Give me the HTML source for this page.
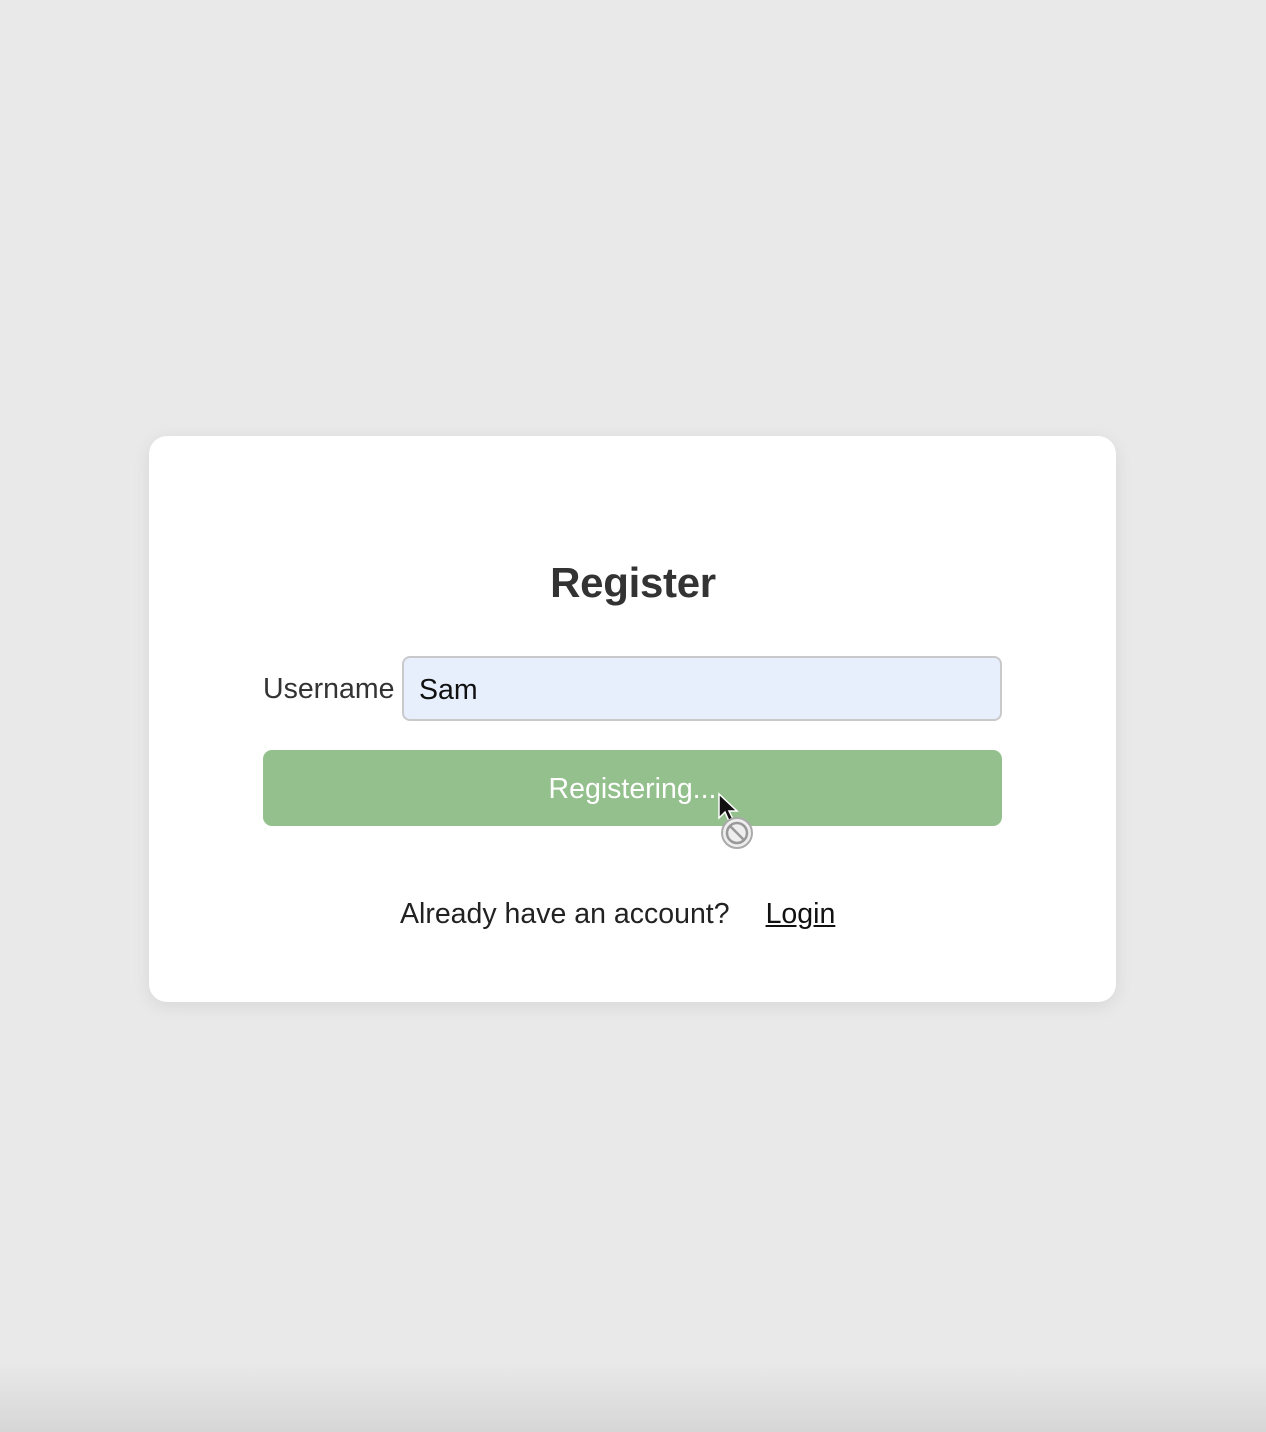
<!DOCTYPE html>
<html><head><meta charset="utf-8"><style>
html,body{margin:0;padding:0;width:1266px;height:1432px;overflow:hidden;background:#e9e9e9;font-family:"Liberation Sans",sans-serif;position:relative}
.fade{position:absolute;left:0;right:0;bottom:0;height:70px;background:linear-gradient(#e9e9e900,#d6d6d6)}
.card{position:absolute;left:149px;top:436px;width:967px;height:566px;background:#fff;border-radius:18px;box-shadow:0 4px 18px rgba(0,0,0,0.08)}
h1{position:absolute;left:0;right:0;top:559px;margin:0;text-align:center;font-size:42px;font-weight:bold;color:#333;letter-spacing:-0.3px}
.lbl{position:absolute;left:263px;top:673px;font-size:28.5px;color:#333}
.inp{position:absolute;left:402px;top:656px;width:600px;height:65px;box-sizing:border-box;background:#e8effc;border:2px solid #c9c9cc;border-radius:8px;font-size:28.5px;color:#111;padding:16px 0 0 15px}
.btn{position:absolute;left:263px;top:750px;width:739px;height:76px;background:#93c08c;border-radius:9px;color:#fff;font-size:28.5px;text-align:center;line-height:78px}
.foot{position:absolute;left:400px;top:898px;font-size:28.5px;color:#222}
.foot a{margin-left:36px;color:#111;text-decoration:underline}
</style></head><body>
<div class="card"></div>
<h1>Register</h1>
<div class="lbl">Username</div>
<div class="inp">Sam</div>
<div class="btn">Registering...</div>
<svg style="position:absolute;left:716px;top:792px" width="42" height="62" viewBox="0 0 42 62">
<path d="M3 2 L3 26 L9 20 L13 29 L17 27 L13 19 L21 19 Z" fill="#111" stroke="#fff" stroke-width="1.5"/>
<circle cx="21" cy="41" r="15" fill="#eee" stroke="#aaa" stroke-width="2"/>
<circle cx="21" cy="41" r="10" fill="none" stroke="#999" stroke-width="2.5"/>
<line x1="14" y1="34" x2="28" y2="48" stroke="#999" stroke-width="2.5"/>
</svg>
<div class="foot">Already have an account?<a>Login</a></div>
<div class="fade"></div>
</body></html>
